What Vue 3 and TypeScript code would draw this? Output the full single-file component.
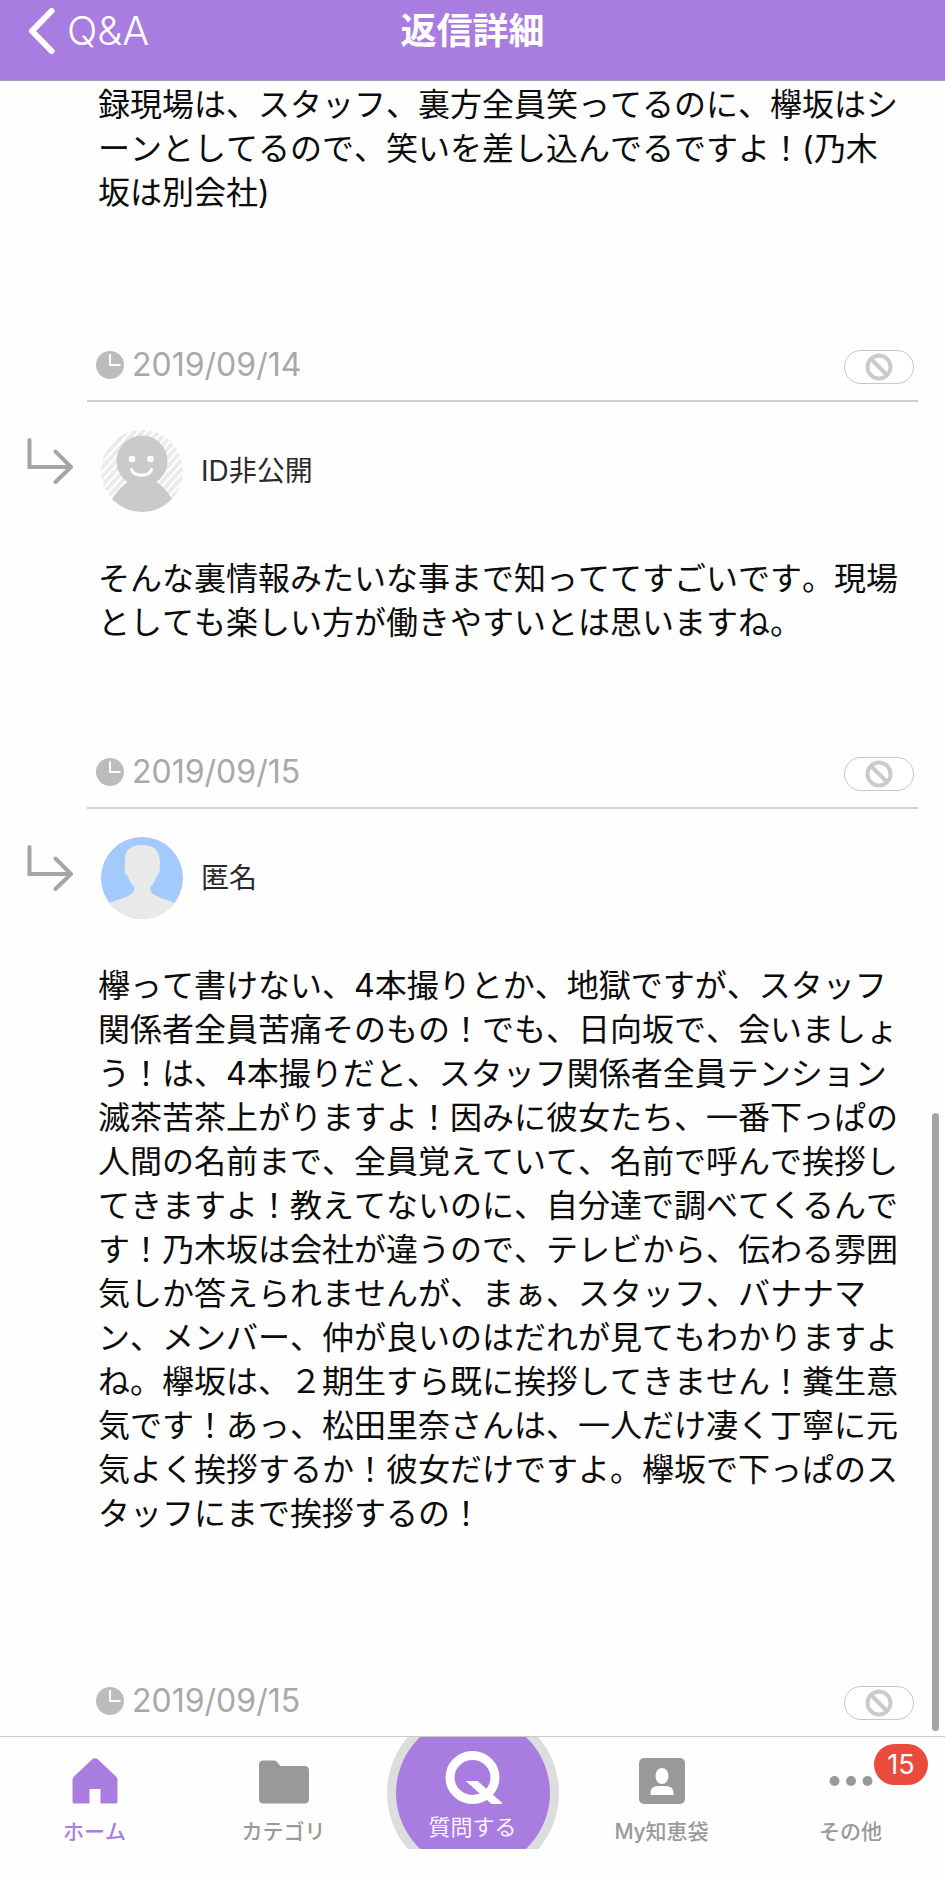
<script setup lang="ts">
interface Reply {
  id: number
  author?: string
  avatar?: 'private' | 'anonymous'
  body: string
  date: string
  size: 'short' | 'medium' | 'long'
}

const replies: Reply[] = [
  {
    id: 1,
    body: '録現場は、スタッフ、裏方全員笑ってるのに、欅坂はシーンとしてるので、笑いを差し込んでるですよ！(乃木坂は別会社)',
    date: '2019/09/14',
    size: 'medium',
  },
  {
    id: 2,
    author: 'ID非公開',
    avatar: 'private',
    body: 'そんな裏情報みたいな事まで知っててすごいです。現場としても楽しい方が働きやすいとは思いますね。',
    date: '2019/09/15',
    size: 'short',
  },
  {
    id: 3,
    author: '匿名',
    avatar: 'anonymous',
    body: '欅って書けない、4本撮りとか、地獄ですが、スタッフ関係者全員苦痛そのもの！でも、日向坂で、会いましょう！は、4本撮りだと、スタッフ関係者全員テンション滅茶苦茶上がりますよ！因みに彼女たち、一番下っぱの人間の名前まで、全員覚えていて、名前で呼んで挨拶してきますよ！教えてないのに、自分達で調べてくるんです！乃木坂は会社が違うので、テレビから、伝わる雰囲気しか答えられませんが、まぁ、スタッフ、バナナマン、メンバー、仲が良いのはだれが見てもわかりますよね。欅坂は、２期生すら既に挨拶してきません！糞生意気です！あっ、松田里奈さんは、一人だけ凄く丁寧に元気よく挨拶するか！彼女だけですよ。欅坂で下っぱのスタッフにまで挨拶するの！',
    date: '2019/09/15',
    size: 'long',
  },
]
</script>

<template>
  <div class="app" lang="ja">
    <header class="bar">
      <button class="back" type="button">
        <svg width="27" height="48" viewBox="0 0 27 48" aria-hidden="true">
          <path d="M23.500 4 4 24l19.500 20" fill="none" stroke="currentColor" stroke-width="6" stroke-linecap="round" stroke-linejoin="round" />
        </svg>
        <span>Q&amp;A</span>
      </button>
      <h1 class="title">返信詳細</h1>
    </header>

    <main class="thread">
      <article v-for="reply in replies" :key="reply.id" class="reply">
        <div v-if="reply.author" class="author">
          <svg class="arrow" width="46" height="46" viewBox="0 0 46 46" fill="none" stroke="currentColor" stroke-width="4" stroke-linecap="round" aria-hidden="true">
            <path d="M2.500 2v27H43" />
            <path d="M28.500 13.500 44 29 28.500 44" stroke-linejoin="round" />
          </svg>
          <svg v-if="reply.avatar === 'private'" width="82" height="82" viewBox="0 0 82 82" aria-hidden="true">
            <defs>
              <pattern id="stripes" width="6" height="6" patternUnits="userSpaceOnUse" patternTransform="rotate(42)">
                <rect width="6" height="6" fill="#fff" />
                <rect width="4" height="6" fill="#ebebeb" />
              </pattern>
              <clipPath id="disc"><circle cx="41" cy="41" r="41" /></clipPath>
            </defs>
            <g clip-path="url(#disc)">
              <rect width="82" height="82" fill="url(#stripes)" />
              <path d="M28 51Q17 58 10 71v13h62V71Q65 58 54 51z" fill="#cacaca" />
              <circle cx="41" cy="31" r="25.500" fill="#cacaca" />
            </g>
            <circle cx="31" cy="29" r="3.300" fill="#fff" />
            <circle cx="49.500" cy="29" r="3.300" fill="#fff" />
            <path d="M30.500 39.500C33 47 48 47 50.500 39.500" fill="none" stroke="#fff" stroke-width="3" stroke-linecap="round" />
          </svg>
          <svg v-else width="82" height="82" viewBox="0 0 82 82" aria-hidden="true">
            <defs>
              <clipPath id="round"><circle cx="41" cy="41" r="41" /></clipPath>
            </defs>
            <g clip-path="url(#round)">
              <rect width="82" height="82" fill="#a4c9fb" />
              <path d="M24 27C23 14 28 8 41 8s18 6 18 19c0 2 0 2-.500 3 1 4-.500 8-3 9-1 4-3 8-6 11-1 5 2 7 6 9 6 3 12 4 18 7v18H9V66c6-3 12-4 18-7 4-2 7-4 6-9-3-3-5-7-6-11-3-1-4-5-3-9z" fill="#e9e9e9" />
            </g>
          </svg>
          <span class="name">{{ reply.author }}</span>
        </div>
        <p class="text" :class="reply.size">{{ reply.body }}</p>
        <footer class="meta">
          <svg class="clock" width="28" height="28" viewBox="0 0 28 28" aria-hidden="true">
            <circle cx="14" cy="14" r="14" fill="#bcbcbc" />
            <path d="M14 3v11h10.500" fill="none" stroke="#fff" stroke-width="2" />
          </svg>
          <time>{{ reply.date }}</time>
          <button class="block" type="button" aria-label="ブロック">
            <svg width="28" height="28" viewBox="0 0 28 28" fill="none" stroke="currentColor" stroke-width="4" aria-hidden="true">
              <circle cx="14" cy="14" r="11.500" />
              <path d="m6 6 16 16" />
            </svg>
          </button>
        </footer>
      </article>
    </main>

    <div class="thumb" aria-hidden="true"></div>

    <nav class="tabs">
      <a class="tab active" href="#home">
        <svg width="46" height="46" viewBox="0 0 46 46" fill="currentColor" aria-hidden="true">
          <path d="M20 1.500Q23 -1 26 1.500L43.500 18Q45.500 20 45.500 22v21.500Q45.500 45.500 43.500 45.500H28.500V31H17.500V45.500H2.500Q.500 45.500 .500 43.500V22Q.500 20 2.500 18z" />
        </svg>
        <span>ホーム</span>
      </a>
      <a class="tab" href="#category">
        <svg width="50" height="46" viewBox="0 0 50 46" fill="currentColor" aria-hidden="true">
          <path d="M4.500 2.500h10.500q2 0 3.500 2l3 3.500h24q4.500 0 4.500 4.500V41q0 4.500-4.500 4.500h-41Q0 45.500 0 41V7q0-4.500 4.500-4.500z" />
        </svg>
        <span>カテゴリ</span>
      </a>
      <a class="ask" href="#ask">
        <span class="disc">
          <svg width="58" height="54" viewBox="0 0 58 54" fill="none" stroke="#fff" aria-hidden="true">
            <ellipse cx="28.500" cy="26.500" rx="22.500" ry="22" stroke-width="9" />
            <svg x="22" y="30" width="36" height="23" viewBox="2 0 36 23">
              <line x1="2" y1="-5" x2="38" y2="27" stroke-width="8" />
            </svg>
          </svg>
          <span>質問する</span>
        </span>
      </a>
      <a class="tab" href="#my">
        <svg width="46" height="46" viewBox="0 0 46 46" aria-hidden="true">
          <rect width="46" height="46" rx="5" fill="currentColor" />
          <ellipse cx="23" cy="18" rx="6.500" ry="8" fill="#fff" />
          <path d="M11.500 37v-2q0-7 8-7h7q8 0 8 7v2z" fill="#fff" />
        </svg>
        <span>My知恵袋</span>
      </a>
      <a class="tab" href="#more">
        <svg width="46" height="46" viewBox="0 0 46 46" fill="currentColor" aria-hidden="true">
          <circle cx="6.500" cy="23" r="5" />
          <circle cx="23" cy="23" r="5" />
          <circle cx="39.500" cy="23" r="5" />
        </svg>
        <span>その他</span>
        <strong class="badge">15</strong>
      </a>
    </nav>
  </div>
</template>

<style>
body {
  margin: 0;
  background: #fefefe;
}
</style>

<style scoped>
.app {
  position: relative;
  display: flex;
  flex-direction: column;
  min-height: 100vh;
  background: #fefefe;
  color: #0c0c0c;
  font-family: Inter, "Noto Sans CJK JP", sans-serif;
  font-kerning: none;
}

.bar {
  display: grid;
  grid-template-columns: 1fr auto 1fr;
  align-items: center;
  box-sizing: border-box;
  height: 81px;
  padding: 0 28px 19px;
  border-bottom: 1px solid #a79cb8;
  background: #a97ddf;
  color: #fff;
}

.back {
  display: flex;
  align-items: center;
  justify-self: start;
  gap: 12px;
  padding: 0;
  border: 0;
  background: none;
  color: inherit;
  font: 300 40px/48px Inter, sans-serif;
}

.title {
  margin: 0;
  font-size: 36px;
  font-weight: 700;
  line-height: 48px;
}

.thread {
  flex: 1;
}

.reply {
  margin: 0 27px 0 87px;
  padding: 28px 0 16px;
  border-bottom: 2px solid #cfcfcf;
}

.reply:first-child {
  padding-top: 2px;
}

.reply:last-child {
  border-bottom: 0;
}

.author {
  display: flex;
  align-items: center;
  margin: 0 0 45px -60px;
}

.arrow {
  margin: 0 28px 20px 0;
  color: #a6a6a6;
}

.name {
  margin-left: 18px;
  color: #2a2a2a;
  font-size: 28px;
  line-height: 40px;
}

.text {
  margin: 0 9px 0 11px;
  font-size: 32px;
  line-height: 44px;
  line-break: loose;
}

.short {
  padding-bottom: 108px;
}

.medium {
  padding-bottom: 131px;
}

.long {
  padding-bottom: 146px;
}

.meta {
  display: flex;
  align-items: center;
  height: 38px;
  padding: 0 4px 0 9px;
  color: #a8a8a8;
  font-size: 32px;
  line-height: 38px;
}

.clock {
  margin-right: 8px;
}

.block {
  display: flex;
  align-items: center;
  justify-content: center;
  align-self: flex-end;
  box-sizing: border-box;
  width: 70px;
  height: 34px;
  margin-left: auto;
  padding: 0;
  border: 1px solid #c8c8c8;
  border-radius: 17px;
  background: #fff;
  color: #cbcbcb;
}

.thumb {
  position: absolute;
  right: 6px;
  bottom: 146px;
  width: 7px;
  height: 618px;
  border-radius: 4px;
  background: #a3a3a3;
}

.tabs {
  display: grid;
  grid-template-columns: repeat(5, 1fr);
  height: 112px;
  padding-bottom: 28px;
  border-top: 1px solid #c9c9c9;
}

.tab {
  position: relative;
  display: flex;
  flex-direction: column;
  align-items: center;
  gap: 14px;
  padding-top: 21px;
  color: #999;
  font-size: 21px;
  font-weight: 500;
  line-height: 28px;
  text-decoration: none;
}

.active {
  color: #a97ddf;
}

.ask {
  display: flex;
  align-items: center;
  justify-content: center;
  overflow: hidden;
  color: #fbf2ff;
  font-size: 22px;
  line-height: 28px;
  text-decoration: none;
}

.disc {
  display: flex;
  flex: none;
  flex-direction: column;
  align-items: center;
  justify-content: center;
  gap: 8px;
  box-sizing: border-box;
  width: 172px;
  height: 172px;
  padding-top: 6px;
  border: 9px solid #dcdedd;
  border-radius: 50%;
  background: #a97ddf;
}

.badge {
  position: absolute;
  top: 7px;
  right: 17px;
  width: 54px;
  border-radius: 21px;
  background: #e94b3c;
  color: #fff;
  font-size: 27px;
  font-weight: 400;
  line-height: 41px;
  text-align: center;
}
</style>
